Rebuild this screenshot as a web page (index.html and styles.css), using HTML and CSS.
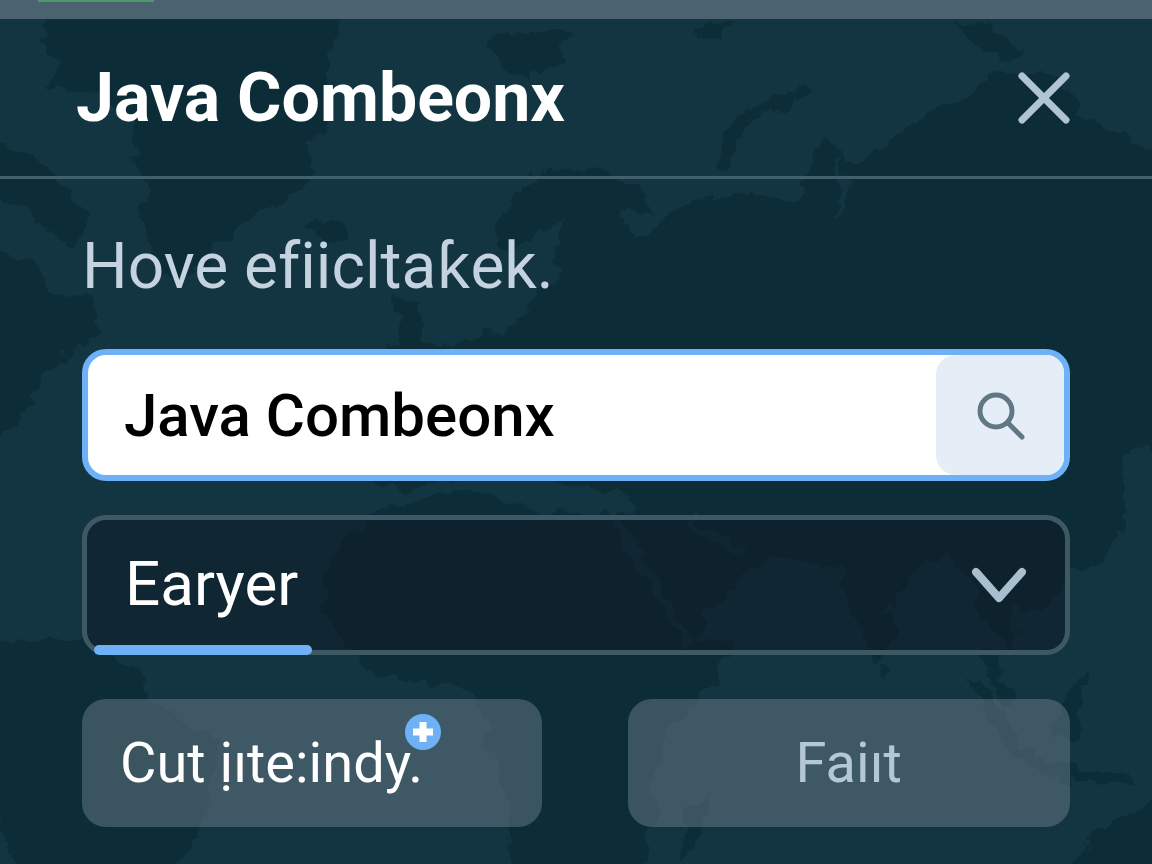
FILE: index.html
```
<!DOCTYPE html>
<html lang="en">
<head>
    <meta charset="UTF-8">
    <meta name="viewport" content="width=device-width, initial-scale=1.0">
    <title>Java Combeonx</title>
    <link rel="stylesheet" href="styles.css">
</head>
<body>
    <!-- World map backdrop -->
    <svg class="map" viewBox="0 0 1152 864" preserveAspectRatio="xMidYMid slice" aria-hidden="true">
        <filter id="coast" x="-5%" y="-5%" width="110%" height="110%" color-interpolation-filters="sRGB">
            <feTurbulence type="fractalNoise" baseFrequency="0.045" numOctaves="4" seed="8"/>
            <feDisplacementMap in="SourceGraphic" scale="24" xChannelSelector="R" yChannelSelector="G"/>
        </filter>
        <g filter="url(#coast)">
            <g class="land">
                <path d="M50 5H345L325 70L330 120L305 145L318 175L285 200L258 205L240 230L215 245L200 270L180 280L160 270L145 240L140 210L150 190L135 170L133 120L100 97L45 85L60 60L40 40Z"/>
                <path d="M-20 130L25 150L60 180L90 215L70 245L45 235L30 210L-20 195Z"/>
                <path d="M-20 250L35 260L50 295L85 295L105 335L75 350L40 375L20 420L-20 450Z"/>
                <path d="M485 42L530 30L575 33L560 42L565 70L545 65L530 78L510 75L500 55Z"/>
                <path d="M690 22H735L728 38L700 35ZM305 222L345 220L352 235L325 244Z"/>
                <path d="M955 22L985 22L1005 40L1025 52L1005 65L980 50Z"/>
                <path d="M495 245L505 205L540 172L590 168L640 190L655 215L620 215L635 240L660 220L700 200L740 192L800 200L808 165L828 138L850 165L888 150L900 125L965 95L1000 72L1060 75L1075 115L1120 135L1180 160V440L1120 455L1125 520L1100 560L1060 580L1045 610L1010 605L1020 660L985 620L965 575L945 552L915 570L890 600L893 640L875 665L855 610L840 570L770 555L720 600L690 640L625 520L560 480L490 470L400 490L360 480L385 345L480 340L500 300L560 280L555 250L530 245L520 270Z"/>
                <path d="M375 510L480 488L530 510L610 515L640 570L690 640L735 640L715 680L660 740L658 800L640 880H515L505 800L485 720L460 685L380 680L345 645L322 610L330 560Z"/>
                <path d="M-20 640L85 640L140 670L150 700L215 740L200 830L160 880H25L-10 800Z"/>
                <path d="M685 810L710 790L700 850L680 864ZM1060 880L1100 830L1170 790V880ZM1060 700L1085 672L1080 735L1050 740ZM877 662L892 670L885 678Z"/>
                <path d="M395 290L415 300L425 345H400Z"/>
            </g>
            <g class="island">
                <path d="M730 168C715 135 750 112 807 90" stroke-width="14"/>
                <path d="M975 680L1015 750L1045 770L1130 780M985 650L1010 710" stroke-width="13"/>
            </g>
            <g class="water">
                <path d="M545 240Q530 255 545 285M838 160Q852 205 828 218M610 510L688 645M690 520L745 555" stroke-width="7"/>
            </g>
            <path class="sea" d="M490 488L530 478L630 495L632 512L550 510L500 500ZM475 290L535 235L568 220L550 265L540 300L505 330L470 335Z"/>
        </g>
    </svg>

    <div class="topbar">
        <div class="progress"></div>
    </div>

    <main class="dialog">
        <header class="dialog-header">
            <h1>Java Combeonx</h1>
            <button type="button" class="close-button" aria-label="Close">
                <svg viewBox="0 0 52 52" aria-hidden="true">
                    <path d="M4 4L48 48M48 4L4 48"/>
                </svg>
            </button>
        </header>

        <form class="dialog-body">
            <label for="query" class="query-label">Hove efiiclta&#409;ek.</label>

            <div class="search-box">
                <input type="text" id="query" name="query" value="Java Combeonx">
                <button type="button" class="search-button" aria-label="Search">
                    <svg viewBox="0 0 50 50" aria-hidden="true">
                        <circle cx="21" cy="21" r="16"/>
                        <path d="M33 33L47 47" stroke-linecap="round"/>
                    </svg>
                </button>
            </div>

            <div class="select-box">
                <select id="layer" name="layer" aria-label="Layer">
                    <option>Earyer</option>
                </select>
                <svg class="chevron" viewBox="0 0 54 36" aria-hidden="true">
                    <path d="M4 5L27 31L50 5"/>
                </svg>
                <span class="select-underline"></span>
            </div>

            <div class="actions">
                <button type="button" class="action-button action-main">
                    <span class="action-label">Cut &#7883;&#305;te:indy.
                        <svg class="badge" viewBox="0 0 36 36" aria-hidden="true">
                            <circle cx="18" cy="18" r="18"/>
                            <path d="M18 8V28M8 18H28"/>
                        </svg>
                    </span>
                </button>
                <button type="button" class="action-button action-faint">Fai&#305;t</button>
            </div>
        </form>
    </main>
</body>
</html>
```
FILE: styles.css
```
* {
    box-sizing: border-box;
}

body {
    margin: 0;
    min-height: 100vh;
    background-color: #133541;
    color: white;
    font-family: Roboto, "Noto Sans", sans-serif;
}

button, input, select {
    margin: 0;
    border: none;
    font-family: inherit;
}

button {
    cursor: pointer;
}

/* Backdrop */
.map {
    position: fixed;
    top: 0;
    left: 0;
    width: 100%;
    height: 100%;
    z-index: -1;
}

.land {
    fill: #0c2d37;
}

.island {
    fill: none;
    stroke: #0c2d37;
}

.water {
    fill: none;
    stroke: #133541;
}

.sea {
    fill: #133541;
}

.topbar {
    height: 19px;
    padding-left: 38px;
    background-color: #4a636f;
}

.progress {
    width: 116px;
    height: 2px;
    background-color: #4c9a68;
}

/* Header */
.dialog-header {
    display: flex;
    align-items: center;
    justify-content: space-between;
    height: 160px;
    padding: 0 82px 0 76px;
    border-bottom: 3px solid #42606b;
}

h1 {
    margin: 0;
    font-size: 68px;
    font-weight: 700;
    line-height: 80px;
}

.close-button {
    padding: 0;
    background: none;
}

.close-button svg {
    display: block;
    width: 52px;
    height: 52px;
    fill: none;
    stroke: #b0c4d4;
    stroke-width: 7;
    stroke-linecap: round;
}

/* Body */
.dialog-body {
    padding: 48px 82px 38px;
}

.query-label {
    display: block;
    margin-bottom: 42px;
    color: #c5d3e1;
    font-size: 64px;
    font-variant-ligatures: none;
    line-height: 80px;
}

.search-box {
    display: flex;
    height: 132px;
    margin-bottom: 34px;
    overflow: hidden;
    background-color: white;
    border: 6px solid #6fb1f7;
    border-radius: 24px;
}

.search-box input {
    flex: 1;
    min-width: 0;
    padding: 0 36px;
    background: none;
    color: black;
    font-size: 60px;
    font-weight: 500;
    outline: none;
}

.search-button {
    display: flex;
    align-items: center;
    justify-content: center;
    width: 128px;
    padding: 0;
    background-color: #e5edf7;
    border-radius: 20px 0 0 20px;
}

.search-button svg {
    width: 50px;
    height: 50px;
    fill: none;
    stroke: #607784;
    stroke-width: 5;
}

.select-box {
    position: relative;
    height: 140px;
    margin-bottom: 44px;
}

.select-box select {
    width: 100%;
    height: 100%;
    padding: 0 38px 4px;
    appearance: none;
    background-color: rgba(14, 24, 36, 0.5);
    border: 5px solid #3f5964;
    border-radius: 24px;
    color: white;
    font-size: 62px;
}

.chevron {
    position: absolute;
    top: 52px;
    right: 44px;
    width: 54px;
    height: 36px;
    fill: none;
    stroke: #a9bfcd;
    stroke-width: 8;
    stroke-linecap: round;
    stroke-linejoin: round;
    pointer-events: none;
}

.select-underline {
    position: absolute;
    bottom: 0;
    left: 12px;
    width: 218px;
    height: 10px;
    background-color: #6fb1f7;
    border-radius: 5px;
}

.actions {
    display: grid;
    grid-template-columns: 27fr 26fr;
    gap: 86px;
}

.action-button {
    height: 128px;
    padding: 0 38px;
    background-color: rgba(128, 146, 156, 0.4);
    border-radius: 24px;
    color: white;
    font-size: 56px;
    line-height: 64px;
}

.action-main {
    text-align: left;
}

.action-faint {
    color: #b4c7d6;
}

.action-label {
    position: relative;
    white-space: nowrap;
}

.badge {
    position: absolute;
    top: -16px;
    right: -18px;
    width: 36px;
    height: 36px;
    fill: #6fb1f7;
}

.badge path {
    stroke: white;
    stroke-width: 7;
}
```
